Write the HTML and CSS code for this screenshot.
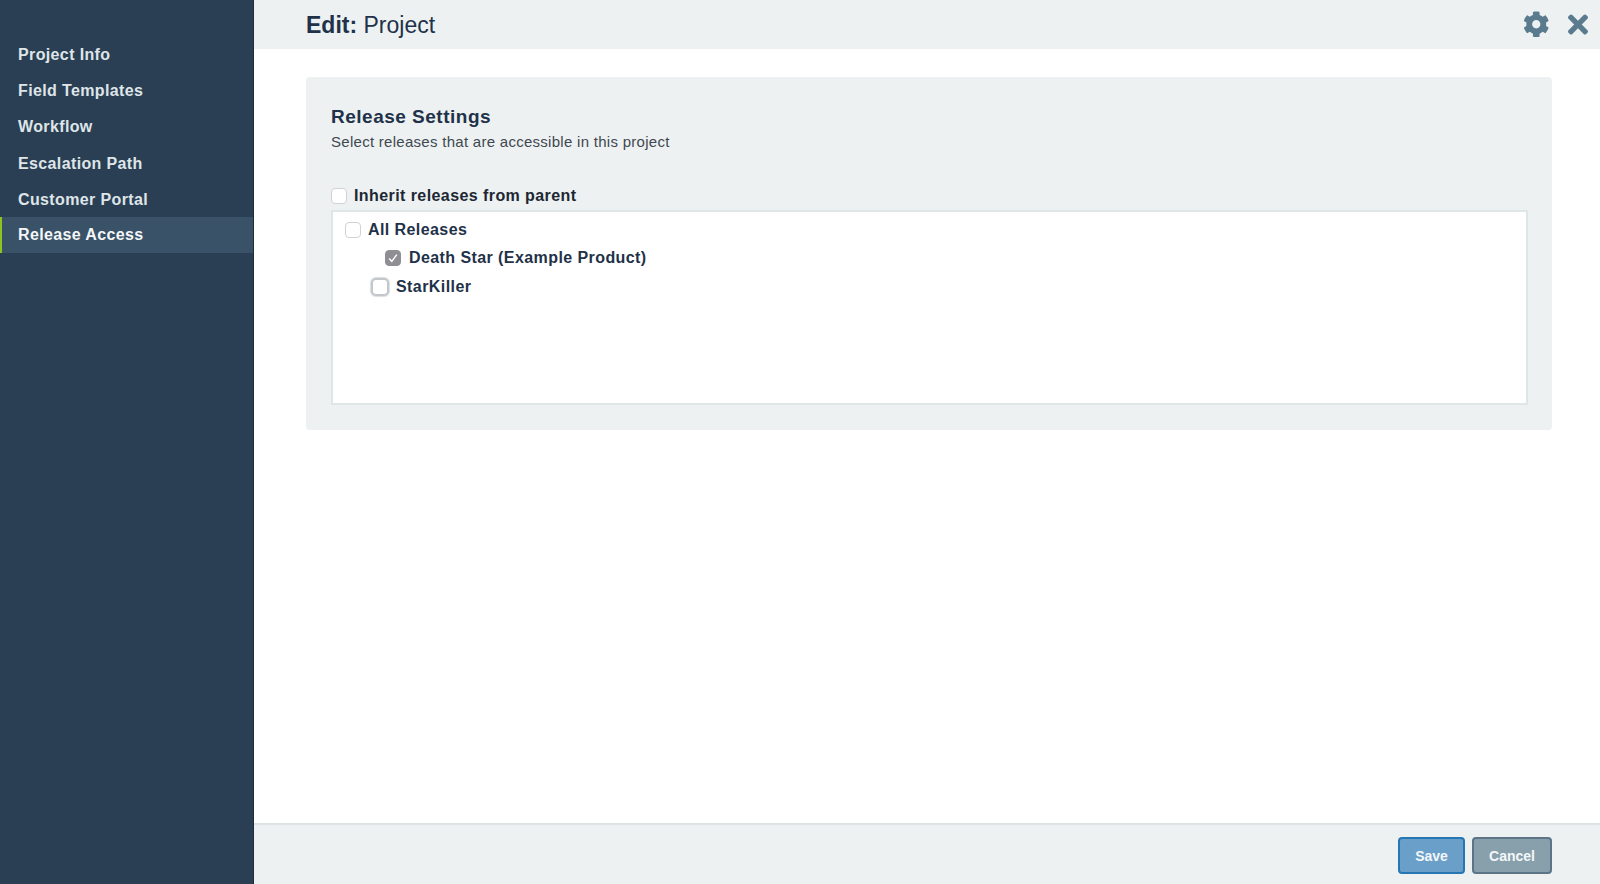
FILE: index.html
```html
<!DOCTYPE html>
<html lang="en">
<head>
<meta charset="utf-8">
<title>Edit: Project</title>
<link rel="stylesheet" href="styles.css">
</head>
<body>
<div class="app">
  <nav class="sidebar">
    <a class="nav-item">Project Info</a>
    <a class="nav-item">Field Templates</a>
    <a class="nav-item">Workflow</a>
    <a class="nav-item">Escalation Path</a>
    <a class="nav-item">Customer Portal</a>
    <a class="nav-item active">Release Access</a>
  </nav>
  <div class="main">
    <header class="topbar">
      <h1 class="title"><b>Edit:</b> Project</h1>
      <div class="actions">
        <svg class="icon gear" viewBox="0 0 512 512"><path d="M487.4 315.7l-42.6-24.6c4.3-23.2 4.3-47 0-70.2l42.6-24.6c4.9-2.8 7.1-8.6 5.5-14-11.1-35.6-30-67.8-54.7-94.6-3.8-4.1-10-5.1-14.8-2.3L380.8 110c-17.9-15.4-38.5-27.3-60.8-35.1V25.8c0-5.6-3.9-10.5-9.4-11.7-36.7-8.2-74.3-7.8-109.2 0-5.5 1.2-9.4 6.1-9.4 11.7V75c-22.2 7.9-42.8 19.8-60.8 35.1L88.7 85.5c-4.9-2.8-11-1.9-14.8 2.3-24.7 26.7-43.6 58.9-54.7 94.6-1.7 5.4.6 11.2 5.5 14L67.3 221c-4.3 23.2-4.3 47 0 70.2l-42.6 24.6c-4.9 2.8-7.1 8.6-5.5 14 11.1 35.6 30 67.8 54.7 94.6 3.8 4.1 10 5.1 14.8 2.3l42.6-24.6c17.9 15.4 38.5 27.3 60.8 35.1v49.2c0 5.6 3.9 10.5 9.4 11.7 36.7 8.2 74.3 7.8 109.2 0 5.5-1.2 9.4-6.1 9.4-11.7v-49.2c22.2-7.9 42.8-19.8 60.8-35.1l42.6 24.6c4.9 2.8 11 1.9 14.8-2.3 24.7-26.7 43.6-58.9 54.7-94.6 1.5-5.5-.7-11.3-5.6-14.1zM256 336c-44.1 0-80-35.9-80-80s35.9-80 80-80 80 35.9 80 80-35.9 80-80 80z"/></svg>
        <svg class="icon close" viewBox="0 0 352 512"><path d="M242.72 256l100.07-100.07c12.28-12.28 12.28-32.19 0-44.48l-22.24-22.24c-12.28-12.28-32.19-12.28-44.48 0L176 189.28 75.93 89.21c-12.28-12.28-32.19-12.28-44.48 0L9.21 111.45c-12.28 12.28-12.28 32.19 0 44.48L109.28 256 9.21 356.07c-12.28 12.28-12.28 32.19 0 44.48l22.24 22.24c12.28 12.28 32.2 12.28 44.48 0L176 322.72l100.07 100.07c12.28 12.28 32.2 12.28 44.48 0l22.24-22.24c12.28-12.28 12.28-32.19 0-44.48L242.72 256z"/></svg>
      </div>
    </header>
    <section class="content">
      <div class="panel">
        <h2 class="panel-title">Release Settings</h2>
        <p class="panel-sub">Select releases that are accessible in this project</p>
        <label class="row inherit"><span class="cb"></span>Inherit releases from parent</label>
        <div class="tree">
          <div class="row level0"><span class="cb"></span>All Releases</div>
          <div class="row level2"><span class="cb checked"><svg viewBox="0 0 16 16"><path d="M4.2 8.4l2.6 3L11.8 4.6" fill="none" stroke="#fff" stroke-width="1.5"/></svg></span>Death Star (Example Product)</div>
          <div class="row level1"><span class="cb focus"></span>StarKiller</div>
        </div>
      </div>
    </section>
    <footer class="footer">
      <button class="btn save">Save</button>
      <button class="btn cancel">Cancel</button>
    </footer>
  </div>
</div>
</body>
</html>
```
FILE: styles.css
```css
* { box-sizing: border-box; }
html, body { margin: 0; height: 100%; }
body { font-family: "Liberation Sans", Arial, sans-serif; color: #1f3249; background: #fff; overflow: hidden; }
.app { display: flex; height: 884px; }
.sidebar { width: 254px; flex: none; background: #2a3f54; padding-top: 36px; border-right: 1px solid #1d2d3d; }
.nav-item { display: block; height: 36.2px; line-height: 38px; padding-left: 18px; font-size: 16px; font-weight: 700; letter-spacing: 0.37px; color: #dfe5e8; }
.nav-item.active { line-height: 36px; background: #395267; color: #f4f6f7; border-left: 2px solid #8fc31f; padding-left: 16px; }
.main { flex: 1; min-width: 0; display: flex; flex-direction: column; }
.topbar { height: 49px; flex: none; background: #edf1f2; display: flex; align-items: center; justify-content: space-between; padding: 0 12px 0 52px; }
.title { margin: 1px 0 0; font-size: 23px; font-weight: 400; color: #1f3249; }
.title b { font-weight: 700; }
.actions { display: flex; align-items: center; gap: 19px; padding-bottom: 1px; }
.icon { display: block; fill: #5a7a8e; }
.gear { width: 26.5px; height: 26.5px; }
.close { width: 20px; height: 29px; }
.content { flex: 1; padding: 28px 48px 0 52px; }
.panel { height: 353px; background: #edf1f2; border-radius: 4px; padding: 27px 24px 0 25px; }
.panel-title { margin: 0; font-size: 19px; line-height: 26px; font-weight: 700; letter-spacing: 0.5px; color: #1f3249; }
.panel-sub { margin: 2px 0 0; font-size: 15px; line-height: 20px; letter-spacing: 0.28px; color: #3f4850; }
.row { display: flex; align-items: center; font-size: 16px; font-weight: 700; letter-spacing: 0.42px; color: #1f3249; }
.inherit { margin-top: 32px; height: 24px; color: #1c2733; }
.inherit .cb { margin-top: -1px; margin-right: 7px; }
.cb { flex: none; display: block; width: 16px; height: 16px; background: #fff; border: 1px solid #cfd3d6; border-radius: 4px; margin-right: 7px; }
.cb svg { display: block; width: 100%; height: 100%; }
.cb.checked { background: #8e8e93; border-color: #8e8e93; margin-right: 8px; }
.cb.checked svg { margin: -1px; width: 16px; height: 16px; }
.cb.focus { width: 18px; height: 18px; border: 2px solid #c4c7ca; border-radius: 5px; margin-right: 7px; box-shadow: 0 0 1px 1px #dcdfe1; }
.tree { height: 195px; margin-top: 2px; background: #fff; border: 2px solid #dfe6e6; padding: 3.4px 0 0 12px; }
.tree .row { height: 28.6px; }
.level2 { padding-left: 40px; }
.level1 { padding-left: 26px; }
.footer { height: 61px; flex: none; background: #edf1f2; border-top: 2px solid #dee3e5; display: flex; justify-content: flex-end; align-items: center; gap: 7px; padding: 2px 48px 0 0; }
.btn { height: 37px; font-family: inherit; font-size: 14px; font-weight: 700; color: #f4f7f9; border-radius: 4px; padding: 0; }
.save { width: 67px; background: #6a9fc9; border: 2px solid #2676b4; }
.cancel { width: 80px; background: #88a0ac; border: 2px solid #5c7586; }
```
